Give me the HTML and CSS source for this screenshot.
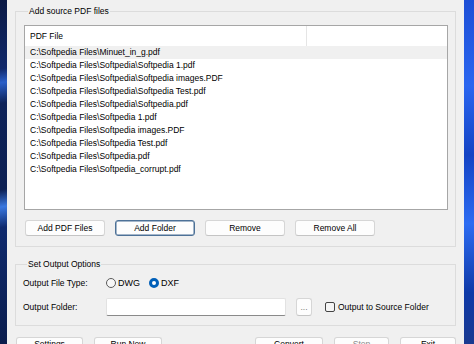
FILE: index.html
```html
<!DOCTYPE html>
<html>
<head>
<meta charset="utf-8">
<link rel="stylesheet" href="styles.css">
</head>
<body>
<div class="screen">
  <div class="wall wall-left"></div>
  <div class="window">
    <fieldset class="group group-source">
      <legend>Add source PDF files</legend>
      <div class="list">
        <div class="list-head">
          <div class="col col-main">PDF File</div>
          <div class="col col-rest"></div>
        </div>
        <div class="row selected">C:\Softpedia Files\Minuet_in_g.pdf</div>
        <div class="row">C:\Softpedia Files\Softpedia\Softpedia 1.pdf</div>
        <div class="row">C:\Softpedia Files\Softpedia\Softpedia images.PDF</div>
        <div class="row">C:\Softpedia Files\Softpedia\Softpedia Test.pdf</div>
        <div class="row">C:\Softpedia Files\Softpedia\Softpedia.pdf</div>
        <div class="row">C:\Softpedia Files\Softpedia 1.pdf</div>
        <div class="row">C:\Softpedia Files\Softpedia images.PDF</div>
        <div class="row">C:\Softpedia Files\Softpedia Test.pdf</div>
        <div class="row">C:\Softpedia Files\Softpedia.pdf</div>
        <div class="row">C:\Softpedia Files\Softpedia_corrupt.pdf</div>
      </div>
      <div class="btn-row">
        <button class="btn">Add PDF Files</button>
        <button class="btn btn-default">Add Folder</button>
        <button class="btn">Remove</button>
        <button class="btn">Remove All</button>
      </div>
    </fieldset>
    <fieldset class="group group-output">
      <legend>Set Output Options</legend>
      <div class="opt-row">
        <span class="opt-label">Output File Type:</span>
        <span class="radio"></span><span class="radio-text">DWG</span>
        <span class="radio checked"></span><span class="radio-text">DXF</span>
      </div>
      <div class="opt-row opt-row-folder">
        <span class="opt-label">Output Folder:</span>
        <span class="textbox"></span>
        <button class="btn btn-browse">...</button>
        <span class="checkbox"></span><span class="check-text">Output to Source Folder</span>
      </div>
    </fieldset>
    <div class="bottom-row">
      <button class="btn btn-b1">Settings</button>
      <button class="btn btn-b2">Run Now</button>
      <span class="spacer"></span>
      <button class="btn btn-b3">Convert</button>
      <button class="btn btn-b4 disabled">Stop</button>
      <button class="btn btn-b5">Exit</button>
    </div>
  </div>
  <div class="wall wall-right"></div>
</div>
</body>
</html>
```
FILE: styles.css
```css
html, body {
  margin: 0;
  padding: 0;
  width: 474px;
  height: 344px;
  overflow: hidden;
  font-family: "Liberation Sans", Arial, sans-serif;
  font-size: 8.5px;
  color: #000;
}
.screen {
  display: flex;
  width: 474px;
  height: 344px;
}
.wall-left {
  width: 7px;
  background: linear-gradient(170deg, #0b1a45 0%, #10286a 20%, #2a5fc8 24%, #0d2258 30%, #0c1f52 55%, #3a78e0 60%, #0f2a6e 66%, #0a1c4c 100%);
}
.wall-right {
  width: 10px;
  background: linear-gradient(180deg, #1d4fd6 0%, #2a66f0 25%, #1443c4 45%, #2d6cf2 65%, #0f3aa8 85%, #1a3a90 100%);
}
.window {
  width: 457px;
  background: #f0f0f0;
  padding-top: 5px;
  box-sizing: border-box;
  display: flex;
  flex-direction: column;
}
.group {
  margin: 0 8px;
  border: 1px solid #dcdcdc;
  border-radius: 0;
  min-width: 0;
}
.group legend {
  padding: 0 1px;
  margin-left: 4px;
  line-height: 12px;
  height: 12px;
}
.group-source {
  padding: 8px 7px 10px 8px;
}
.list {
  height: 185px;
  box-sizing: border-box;
  border: 1px solid #a6a6a6;
  background: #fff;
}
.list-head {
  display: flex;
  height: 20px;
  line-height: 21px;
}
.col-main {
  width: 282px;
  padding-left: 5px;
  box-sizing: border-box;
  border-right: 1px solid #e5e5e5;
}
.col-rest {
  flex: 1;
}
.row {
  height: 13px;
  line-height: 13px;
  padding-left: 5px;
}
.row.selected {
  background: #f0f0f0;
}
.btn-row {
  display: flex;
  gap: 10px;
  margin-top: 10px;
  padding-left: 1px;
}
.btn {
  font-family: inherit;
  font-size: 8.5px;
  color: #000;
  height: 16px;
  width: 80px;
  padding: 0;
  background: #fdfdfd;
  border: 1px solid #d6d6d6;
  border-bottom-color: #c4c4c4;
  border-radius: 3px;
  box-sizing: border-box;
  line-height: 14px;
}
.btn-default {
  border: 1px solid #4d7197;
  box-shadow: inset 0 0 0 0.5px #4d7197;
}
.group-output {
  margin-top: 11px;
  padding: 5px 8px 9px 7px;
}
.opt-row {
  display: flex;
  align-items: center;
  height: 16px;
}
.opt-row-folder {
  margin-top: 7px;
  height: 18px;
}
.opt-label {
  width: 83px;
  flex: none;
}
.radio {
  width: 10px;
  height: 10px;
  box-sizing: border-box;
  border: 1px solid #5a5a5a;
  border-radius: 50%;
  background: #f7f7f7;
  flex: none;
}
.radio.checked {
  border: 3px solid #005fb8;
  background: #fff;
  margin-left: 9px;
}
.radio-text {
  margin-left: 2px;
  font-size: 9px;
}
.textbox {
  width: 180px;
  height: 18px;
  box-sizing: border-box;
  background: #fff;
  border: 1px solid #e2e2e2;
  border-bottom-color: #8a8a8a;
  border-radius: 2px;
  flex: none;
}
.btn-browse {
  width: 16px;
  height: 18px;
  margin-left: 10px;
  color: #7a7a7a;
  line-height: 14px;
}
.checkbox {
  width: 10px;
  height: 10px;
  box-sizing: border-box;
  border: 1px solid #444;
  border-radius: 2px;
  background: #f5f5f5;
  margin-left: 13px;
  flex: none;
}
.check-text {
  margin-left: 3px;
}
.bottom-row {
  display: flex;
  margin-top: 11px;
  padding-left: 9px;
  padding-right: 8px;
  gap: 11px;
}
.bottom-row .btn {
  height: 14px;
  line-height: 12px;
}
.btn-b1 { width: 67px; }
.btn-b2 { width: 68px; }
.btn-b3 { width: 68px; }
.btn-b4 { width: 55px; }
.btn-b5 { width: 56px; }
.spacer { flex: 1; }
.disabled { color: #8a8a8a; }
```
